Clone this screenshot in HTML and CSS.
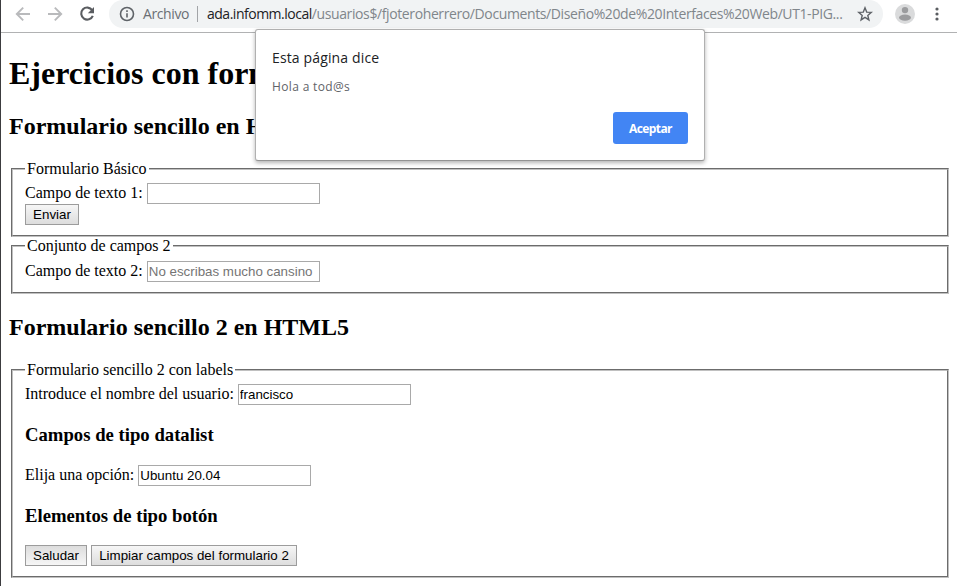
FILE: index.html
```html
<!DOCTYPE html>
<html lang="es">
<head>
<meta charset="utf-8">
<title>Ejercicios con formularios</title>
<link rel="stylesheet" href="styles.css">
</head>
<body>
<header class="toolbar">
  <svg class="nav back" viewBox="0 0 16 16"><path d="M15 8H2M8.2 1.6 1.8 8l6.4 6.4"/></svg>
  <svg class="nav forward" viewBox="0 0 16 16"><path d="M1 8h13M7.8 1.6 14.2 8l-6.4 6.4"/></svg>
  <svg class="reload" viewBox="0 0 16 16"><path class="arc" d="M13.2 4.2A6 6 0 1 0 13.8 9.8"/><path class="tip" d="M15 1v6.2H8.8z"/></svg>
  <div class="address">
    <svg class="info" viewBox="0 0 16 16"><circle cx="8" cy="8" r="6.5"/><path d="M8 7.2v4.2M8 4.2v1.7"/></svg>
    <span class="scheme">Archivo</span>
    <span class="divider"></span>
    <span class="url"><span class="host">ada.infomm.local</span><span class="path">/usuarios$/fjoteroherrero/Documents/Diseño%20de%20Interfaces%20Web/UT1-PIG...</span></span>
    <svg class="star" viewBox="0 0 16 16"><path d="M8 1.8 9.7 6.1l4.6.3-3.5 3 1.1 4.5L8 11.4l-3.9 2.5 1.1-4.5-3.5-3 4.6-.3z"/></svg>
  </div>
  <svg class="avatar" viewBox="0 0 20 20"><circle class="disc" cx="10" cy="10" r="10"/><circle class="person" cx="10" cy="6.1" r="3.2"/><ellipse class="person" cx="10" cy="13.6" rx="6" ry="3.1"/></svg>
  <svg class="menu" viewBox="0 0 4 14"><circle cx="2" cy="2" r="1.6"/><circle cx="2" cy="7" r="1.6"/><circle cx="2" cy="12" r="1.6"/></svg>
</header>
<main class="page">
  <h1>Ejercicios con formularios</h1>
  <h2>Formulario sencillo en HTML5</h2>
  <fieldset class="basic">
    <legend>Formulario Básico</legend>
    <div class="row"><label for="t1">Campo de texto 1:</label><input id="t1" type="text"></div>
    <div class="row"><button class="send" type="button">Enviar</button></div>
  </fieldset>
  <fieldset class="second">
    <legend>Conjunto de campos 2</legend>
    <div class="row"><label for="t2">Campo de texto 2:</label><input id="t2" type="text" placeholder="No escribas mucho cansino"></div>
  </fieldset>
  <h2 class="heading-two">Formulario sencillo 2 en HTML5</h2>
  <fieldset class="labels">
    <legend>Formulario sencillo 2 con labels</legend>
    <div class="row"><label for="user">Introduce el nombre del usuario:</label><input id="user" type="text" value="francisco"></div>
    <h3>Campos de tipo datalist</h3>
    <div class="row"><label for="os">Elija una opción:</label><input id="os" type="text" value="Ubuntu 20.04"></div>
    <h3>Elementos de tipo botón</h3>
    <div class="row actions"><button class="greet" type="button">Saludar</button><button class="clear" type="button">Limpiar campos del formulario 2</button></div>
  </fieldset>
</main>
<section class="dialog">
  <div class="dialog-title">Esta página dice</div>
  <div class="dialog-text">Hola a tod@s</div>
  <button class="accept" type="button">Aceptar</button>
</section>
</body>
</html>
```
FILE: styles.css
```css
* { box-sizing: border-box; }
body {
  margin: 0;
  height: 586px;
  overflow: hidden;
  border-left: 1px solid #3c3c3f;
  background: #fff;
  color: #000;
  font: 16px/18px "Liberation Serif", "Times New Roman", serif;
}
svg { display: block; flex: none; }

.toolbar {
  display: flex;
  align-items: center;
  height: 33px;
  padding: 0 0 4px 14px;
  border-bottom: 1px solid #b1b2b3;
  font-family: "Open Sans", "Noto Sans", sans-serif;
}
.nav { width: 16px; height: 16px; fill: none; stroke: #b9babc; stroke-width: 1.9; }
.forward { margin-left: 16px; }
.reload { width: 16px; height: 16px; margin-left: 16px; }
.arc { fill: none; stroke: #5a5d61; stroke-width: 2.1; }
.tip { fill: #5a5d61; }
.address {
  display: flex;
  align-items: center;
  width: 774px;
  height: 28px;
  margin-left: 14px;
  padding-left: 10px;
  border-radius: 14px;
  background: #f1f3f4;
}
.info { width: 16px; height: 16px; fill: none; stroke: #5f6368; stroke-width: 1.6; }
.scheme { width: 47px; margin-left: 8px; color: #6b6f74; font-size: 14px; letter-spacing: -.4px; white-space: nowrap; }
.divider { width: 1px; height: 16px; margin-left: 7px; background: #a2a4a7; }
.url { width: 637px; margin-left: 9px; font-size: 14px; white-space: nowrap; }
.host { color: #202124; letter-spacing: -.49px; }
.path { color: #80868b; letter-spacing: -.39px; }
.star { width: 16px; height: 16px; margin-left: 13px; fill: none; stroke: #5f6368; stroke-width: 1.4; }
.avatar { width: 20px; height: 20px; margin-left: 12px; }
.disc { fill: #dadbdc; }
.person { fill: #9b9c9e; }
.menu { width: 4px; height: 14px; margin-left: 20px; fill: #5a5d61; }

.page { padding: 22px 8px 0; }
h1, h2, h3 { margin: 0; font-weight: bold; white-space: nowrap; }
h1 { height: 37px; font-size: 32px; line-height: 37px; }
h2 { height: 27px; margin-top: 21px; font-size: 24px; line-height: 27px; }
h3 { height: 21px; margin-top: 19px; font-size: 18.72px; line-height: 21px; }
fieldset { min-width: 0; margin: 0 0 0 2px; width: 938px; padding: 5px 12px 10px; border: 2px groove #c0c0c0; }
legend { height: 18px; padding: 0 2px; line-height: 18px; }
.basic { margin-top: 20px; }
.second { padding-top: 6px; }
.heading-two { margin-top: 20px; }
.labels { margin-top: 20px; }
.row { display: flex; align-items: center; height: 21px; }
h3 + .row { margin-top: 20px; }
h3 + .actions { margin-top: 19px; }
label { padding-bottom: 2px; line-height: 17px; white-space: nowrap; }
input {
  width: 173px;
  height: 21px;
  margin: 0 0 0 4px;
  padding: 1px;
  border: 1px solid #a9a9a9;
  border-radius: 0;
  outline: 0;
  background: #fff;
  color: #000;
  font: 13.333px "Liberation Sans", Arial, sans-serif;
}
input::placeholder { color: #757575; opacity: 1; }
.row button {
  height: 21px;
  padding: 0;
  border: 1px solid #9c9c9c;
  border-radius: 0;
  background: linear-gradient(#f6f6f6, #dddddd);
  color: #000;
  font: 13.333px "Liberation Sans", Arial, sans-serif;
  white-space: nowrap;
}
.send { width: 54px; }
.row .greet { width: 62px; background: linear-gradient(#dddddd, #f6f6f6); }
.clear { width: 206px; margin-left: 4px; }

.dialog {
  position: absolute;
  left: 255px;
  top: 29px;
  display: flex;
  flex-direction: column;
  width: 450px;
  height: 132px;
  padding: 18px 16px 16px;
  border: 1px solid #b0b0b0;
  border-bottom-color: #939393;
  border-radius: 3px;
  background: #fff;
  box-shadow: 0 2px 4px rgba(0, 0, 0, .3);
  font-family: "Open Sans", "Noto Sans", sans-serif;
}
.dialog-title { height: 20px; color: #202124; font-size: 14px; line-height: 20px; letter-spacing: .14px; }
.dialog-text { height: 18px; margin-top: 10px; color: #5f6368; font-size: 12px; line-height: 18px; letter-spacing: .35px; }
.accept {
  align-self: flex-end;
  width: 75px;
  height: 32px;
  margin-top: 16px;
  padding: 0;
  border: 0;
  border-radius: 3px;
  background: #4285f4;
  color: #fff;
  font: bold 12px "Open Sans", "Noto Sans", sans-serif;
  letter-spacing: -.6px;
}
```
